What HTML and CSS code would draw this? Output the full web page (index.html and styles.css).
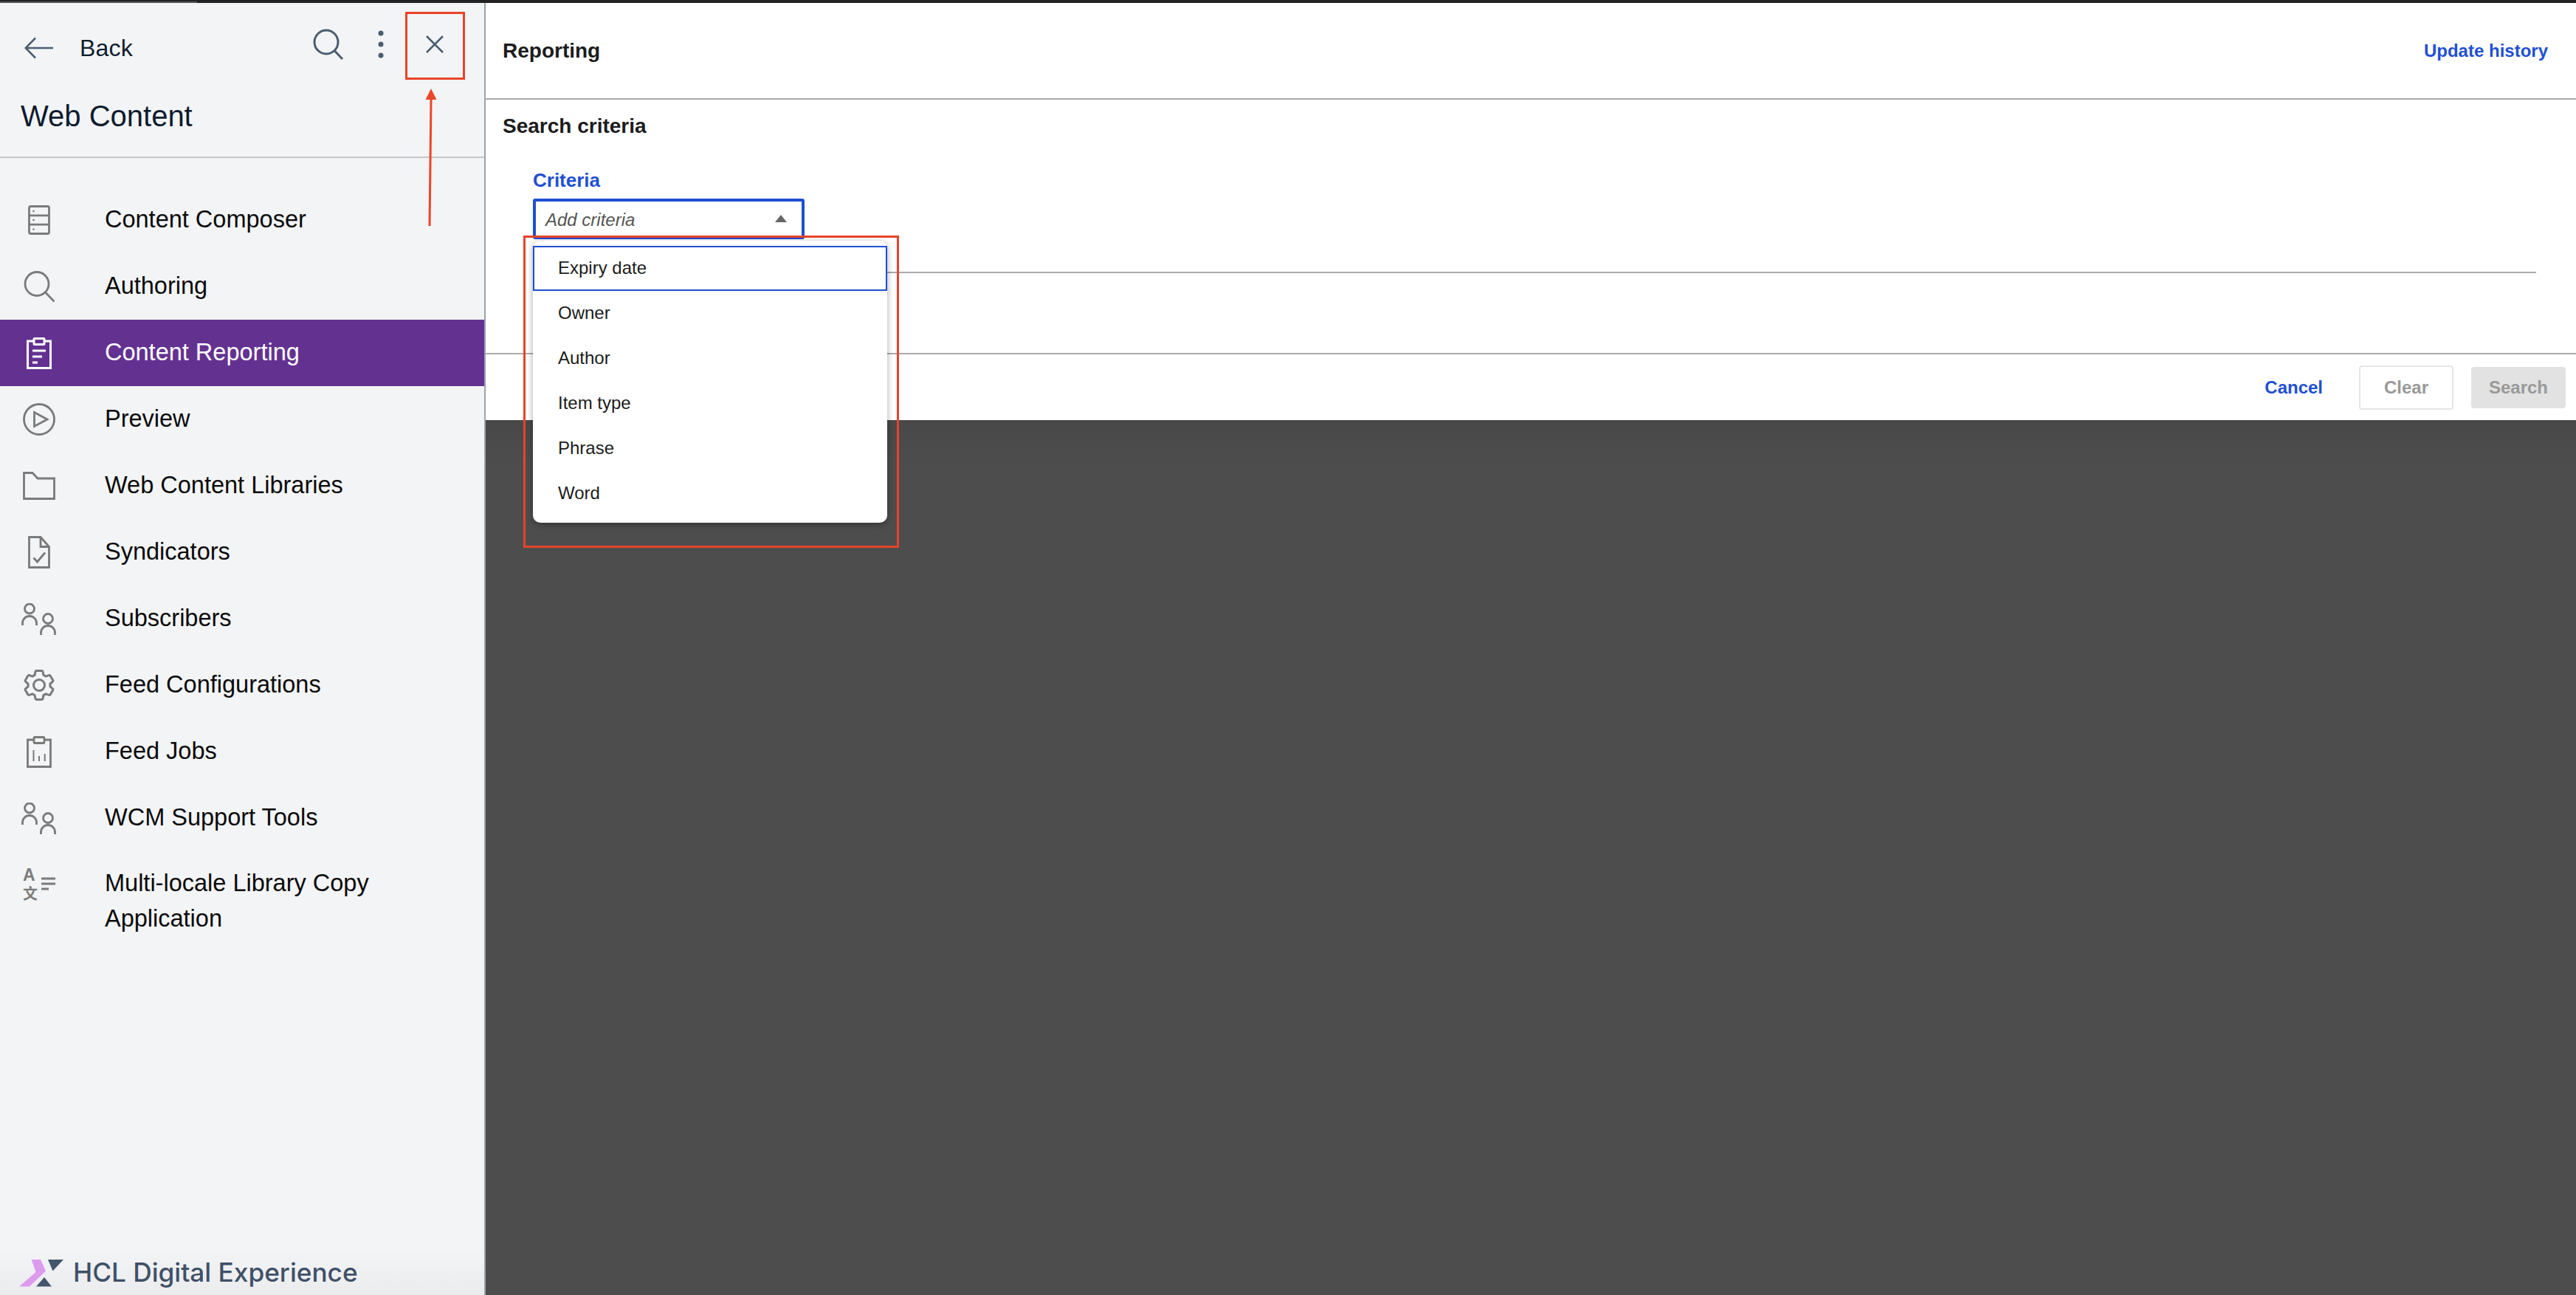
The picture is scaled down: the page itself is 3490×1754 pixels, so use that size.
FILE: index.html
```html
<!DOCTYPE html>
<html lang="en">
<head>
<meta charset="utf-8">
<title>Web Content - Reporting</title>
<link rel="stylesheet" href="styles.css">
</head>
<body>
<div class="page">
  <div class="topbar"><div class="topbar-progress"></div></div>
  <div class="shell">
    <aside class="sidebar">
      <div class="side-head">
        <svg class="back-arrow" width="40" height="30" viewBox="0 0 40 30"><path d="M39 15H2M15 1.5L1.7 15L15 28.5"/></svg>
        <span class="back-label">Back</span>
        <div class="side-tools">
          <svg class="tool tool-search" width="41" height="42" viewBox="0 0 41 42"><circle cx="18" cy="18" r="16"/><path d="M29.500 30L40 41"/></svg>
          <svg class="tool tool-dots" width="8" height="38" viewBox="0 0 8 38"><circle cx="4" cy="4" r="3.500"/><circle cx="4" cy="19" r="3.500"/><circle cx="4" cy="34" r="3.500"/></svg>
          <svg class="tool tool-close" width="26" height="26" viewBox="0 0 26 26"><path d="M2 2L24 24M24 2L2 24"/></svg>
        </div>
      </div>
      <h1 class="side-title">Web Content</h1>
      <nav class="side-nav">
        <a class="nav-row"><span class="nav-icon"><svg class="ico" width="30" height="40" viewBox="0 0 30 40"><rect x="1.500" y="1.500" width="27" height="37" rx="2"/><path d="M1.500 13.800H28.500M1.500 26.200H28.500"/><circle class="dot" cx="7.500" cy="8" r="1.300"/><circle class="dot" cx="7.500" cy="20" r="1.300"/><circle class="dot" cx="7.500" cy="32.500" r="1.300"/></svg></span><span class="nav-text">Content Composer</span></a>
        <a class="nav-row"><span class="nav-icon"><svg class="ico" width="42" height="42" viewBox="0 0 42 42"><circle cx="18" cy="17.500" r="16"/><path d="M29.500 29L41.500 41.500"/></svg></span><span class="nav-text">Authoring</span></a>
        <a class="nav-row nav-active"><span class="nav-icon"><svg class="ico" width="34" height="43" viewBox="0 0 34 43"><path d="M10 5H1.500V41.500H32.500V5H24"/><rect x="10" y="1.500" width="14" height="8" rx="1"/><path d="M8 18H26M8 26H21M8 34H15"/></svg></span><span class="nav-text">Content Reporting</span></a>
        <a class="nav-row"><span class="nav-icon"><svg class="ico" width="44" height="44" viewBox="0 0 44 44"><circle cx="22" cy="22" r="20.500"/><path d="M15.500 12.500L33 22L15.500 31.500Z"/></svg></span><span class="nav-text">Preview</span></a>
        <a class="nav-row"><span class="nav-icon"><svg class="ico" width="44" height="38" viewBox="0 0 44 38"><path d="M1.500 1.500H13L20 9H42.500V36.500H1.500Z"/></svg></span><span class="nav-text">Web Content Libraries</span></a>
        <a class="nav-row"><span class="nav-icon"><svg class="ico" width="30" height="44" viewBox="0 0 30 44"><path d="M1.500 1.500H17L28.500 14.500V42.500H1.500Z"/><path d="M17 1.500V14.500H28.500"/><path d="M7.500 29.500L12.500 35L23 22.500"/></svg></span><span class="nav-text">Syndicators</span></a>
        <a class="nav-row"><span class="nav-icon"><svg class="ico" width="48" height="43" viewBox="0 0 48 43"><circle cx="11" cy="7.500" r="6.500"/><path d="M1.500 30V27A9.500 9.500 0 0 1 20.500 27V30"/><circle cx="36" cy="21" r="6.500"/><path d="M26.500 43V40A9.500 9.500 0 0 1 45.500 40V43"/></svg></span><span class="nav-text">Subscribers</span></a>
        <a class="nav-row"><span class="nav-icon"><svg class="ico-fill" width="42" height="44" viewBox="2 1.500 28 29"><path d="M27,16.760c0-.25,0-.5,0-.76s0-.51,0-.77l1.920-1.680A2,2,0,0,0,29.300,11L26.940,7a2,2,0,0,0-1.730-1,2,2,0,0,0-.64.1l-2.430.82a11.350,11.350,0,0,0-1.310-.75l-.51-2.520a2,2,0,0,0-2-1.610H13.640a2,2,0,0,0-2,1.610l-.51,2.520a11.480,11.480,0,0,0-1.320.75L7.430,6.060A2,2,0,0,0,6.790,6,2,2,0,0,0,5.060,7L2.700,11a2,2,0,0,0,.41,2.510L5,15.240c0,.25,0,.5,0,.76s0,.51,0,.77L3.110,18.450A2,2,0,0,0,2.700,21L5.060,25a2,2,0,0,0,1.730,1,2,2,0,0,0,.64-.1l2.430-.82a11.350,11.350,0,0,0,1.310.75l.51,2.520a2,2,0,0,0,2,1.610h4.720a2,2,0,0,0,2-1.610l.51-2.520a11.480,11.480,0,0,0,1.320-.75l2.420.82a2,2,0,0,0,.64.1,2,2,0,0,0,1.730-1L29.300,21a2,2,0,0,0-.41-2.510ZM25.210,24l-3.430-1.160a8.860,8.860,0,0,1-2.710,1.570L18.360,28H13.640l-.71-3.550a9.360,9.360,0,0,1-2.700-1.570L6.790,24,4.430,20l2.720-2.400a8.900,8.900,0,0,1,0-3.130L4.430,12,6.790,8l3.430,1.160a8.860,8.860,0,0,1,2.710-1.570L13.640,4h4.720l.71,3.550a9.360,9.360,0,0,1,2.700,1.570L25.210,8l2.360,4-2.720,2.400a8.900,8.900,0,0,1,0,3.130L27.570,20Z"/><path d="M16,22a6,6,0,1,1,6-6A5.940,5.940,0,0,1,16,22Zm0-10a3.910,3.910,0,0,0-4,4,3.910,3.910,0,0,0,4,4,3.910,3.910,0,0,0,4-4A3.910,3.910,0,0,0,16,12Z"/></svg></span><span class="nav-text">Feed Configurations</span></a>
        <a class="nav-row"><span class="nav-icon"><svg class="ico" width="34" height="43" viewBox="0 0 34 43"><path d="M10 5H1.500V41.500H32.500V5H24"/><rect x="10" y="1.500" width="14" height="8" rx="1"/><path class="thin" d="M9.500 34V19M17 34V27M24.700 34V24"/></svg></span><span class="nav-text">Feed Jobs</span></a>
        <a class="nav-row"><span class="nav-icon"><svg class="ico" width="48" height="43" viewBox="0 0 48 43"><circle cx="11" cy="7.500" r="6.500"/><path d="M1.500 30V27A9.500 9.500 0 0 1 20.500 27V30"/><circle cx="36" cy="21" r="6.500"/><path d="M26.500 43V40A9.500 9.500 0 0 1 45.500 40V43"/></svg></span><span class="nav-text">WCM Support Tools</span></a>
        <a class="nav-row nav-tall"><span class="nav-icon"><svg class="ico-lang" width="44" height="44" viewBox="0 0 44 44"><text class="lang-a" x="0" y="17">A</text><text class="lang-b" x="0" y="42">文</text><path d="M25 14H44M25 21H44M25 28H35"/></svg></span><span class="nav-text">Multi-locale Library Copy Application</span></a>
      </nav>
      <div class="side-foot">
        <svg width="60" height="37" viewBox="0 0 60 37"><polygon class="logo-pink" points="16.500,0 29,0 36,15.500 14,36.500 0,36.500 22.500,17"/><polygon class="logo-dark" points="39,0 60,0 45.500,15.500"/><polygon class="logo-dark" points="34,24 44,36.500 23,36.500"/></svg>
        <span class="brand">HCL Digital Experience</span>
      </div>
    </aside>
    <main class="main">
      <section class="panel">
        <header class="panel-head">
          <span class="panel-title">Reporting</span>
          <a class="link-strong">Update history</a>
        </header>
        <div class="panel-body">
          <h2 class="section-title">Search criteria</h2>
          <div class="field">
            <label class="field-label">Criteria</label>
            <div class="select-wrap">
              <div class="select">
                <span class="select-placeholder">Add criteria</span>
                <span class="select-caret"></span>
              </div>
              <ul class="dropdown">
                <li class="option option-focus">Expiry date</li>
                <li class="option">Owner</li>
                <li class="option">Author</li>
                <li class="option">Item type</li>
                <li class="option">Phrase</li>
                <li class="option">Word</li>
              </ul>
            </div>
            <div class="field-rule"></div>
          </div>
        </div>
        <footer class="panel-foot">
          <a class="link-strong cancel">Cancel</a>
          <button class="btn btn-outline">Clear</button>
          <button class="btn btn-solid">Search</button>
        </footer>
      </section>
      <div class="backdrop"></div>
    </main>
  </div>
  <div class="mark mark-close"></div>
  <div class="mark mark-menu"></div>
  <svg class="mark-arrow" width="30" height="195" viewBox="0 0 30 195"><polygon points="14,5 6.500,20 21.500,20"/><path d="M14 18L12 191"/></svg>
</div>
</body>
</html>
```
FILE: styles.css
```css
* { box-sizing: border-box; }
html, body { margin: 0; padding: 0; }
body {
  font-family: "Liberation Sans", Arial, sans-serif;
  background: #4d4d4d;
}
.page {
  position: relative;
  width: 3490px;
  height: 1754px;
  overflow: hidden;
  display: flex;
  flex-direction: column;
}
.topbar { height: 4px; background: #222; flex: none; padding-top: 2px; }
.topbar-progress { width: 267px; height: 2px; background: #555; }
.shell { flex: 1; display: flex; min-height: 0; }

/* sidebar */
.sidebar {
  width: 658px;
  flex: none;
  background: #f3f4f6;
  border-right: 2px solid #9aa3ad;
  display: flex;
  flex-direction: column;
}
.side-head {
  height: 122px;
  display: flex;
  align-items: center;
  padding-left: 33px;
  flex: none;
}
.back-arrow path { fill: none; stroke: #4a5d70; stroke-width: 2.500; }
.back-label { font-size: 32px; color: #0f1e2e; margin-left: 35px; letter-spacing: 0.200px; }
.side-tools { margin-left: auto; display: flex; align-items: center; margin-bottom: 10px; padding-right: 54px; }
.tool { flex: none; }
.tool-search { margin-right: 47px; }
.tool-search circle, .tool-search path { fill: none; stroke: #4a5d70; stroke-width: 3; }
.tool-dots { margin-right: 56px; fill: #4a5d70; }
.tool-close path { fill: none; stroke: #4a5d70; stroke-width: 2.500; }
.side-title {
  margin: 7px 0 0;
  padding: 0 0 31px 28px;
  font-size: 40px;
  line-height: 48px;
  font-weight: 400;
  color: #0d1b2e;
  border-bottom: 2px solid #c4c6c9;
  flex: none;
}
.side-nav { padding-top: 39px; flex: none; }
.nav-row { display: flex; align-items: center; height: 90px; color: #0a0a0a; }
.nav-tall { align-items: flex-start; height: auto; padding-top: 20px; }
.nav-tall .nav-icon { padding-top: 3px; }
.nav-icon { width: 106px; flex: none; display: flex; justify-content: center; margin-right: 36px; }
.nav-text { font-size: 32.500px; line-height: 48px; width: 440px; position: relative; top: -1px; }
.nav-active { background: #633291; color: #fff; }
.ico { fill: none; stroke: #7a7a7a; stroke-width: 2.800; display: block; }
.ico .dot { fill: #7a7a7a; stroke: none; }
.ico .thin { stroke-width: 2; }
.ico-fill { fill: #7a7a7a; display: block; }
.nav-active .ico { stroke: #fff; stroke-width: 3; }
.ico-lang { display: block; fill: #7a7a7a; overflow: visible; }
.ico-lang path { fill: none; stroke: #7a7a7a; stroke-width: 3; }
.lang-a { font-family: "Liberation Sans", sans-serif; font-size: 23px; font-weight: 700; }
.lang-b { font-family: "Noto Sans CJK SC", sans-serif; font-size: 20px; font-weight: 700; }
.side-foot {
  margin-top: auto;
  height: 64px;
  padding: 0 0 11px 26px;
  display: flex;
  align-items: flex-end;
  background: linear-gradient(#f3f4f6, #ebecee);
}
.side-foot svg { display: block; flex: none; }
.logo-pink { fill: #dd9bee; }
.logo-dark { fill: #44566c; }
.brand {
  font-family: Inter, sans-serif;
  font-weight: 500;
  font-size: 35.200px;
  line-height: 40px;
  color: #3f5068;
  margin-left: 13px;
  white-space: nowrap;
}

/* main */
.main { flex: 1; display: flex; flex-direction: column; min-width: 0; }
.panel { background: #fff; height: 565px; flex: none; display: flex; flex-direction: column; }
.panel-head {
  height: 131px;
  flex: none;
  display: flex;
  align-items: center;
  justify-content: space-between;
  padding: 0 38px 0 23px;
  border-bottom: 2px solid #aaa;
}
.panel-title { font-size: 28px; font-weight: 700; color: #1c1c1c; }
.link-strong { font-size: 24px; font-weight: 700; color: #1f50d3; }
.panel-body { flex: 1; padding: 19px 54px 0 23px; }
.section-title { margin: 0; font-size: 28px; line-height: 34px; font-weight: 700; color: #1c1c1c; }
.field { margin: 40px 0 0 41px; }
.field-label { display: block; font-size: 26px; line-height: 32px; font-weight: 700; color: #1f50d3; }
.select-wrap { position: relative; margin-top: 9px; }
.select {
  width: 368px;
  height: 55px;
  border: 4px solid #1f4fd0;
  border-radius: 3px;
  display: flex;
  align-items: center;
  justify-content: space-between;
  padding: 2px 20px 0 13px;
}
.select-placeholder { font-size: 24px; font-style: italic; color: #555; }
.select-caret {
  width: 0;
  height: 0;
  border-left: 8px solid transparent;
  border-right: 8px solid transparent;
  border-bottom: 10px solid #666;
  margin-top: -4px;
}
.dropdown {
  position: absolute;
  left: 0;
  top: 57px;
  width: 480px;
  height: 382px;
  margin: 0;
  padding: 7px 0 0;
  list-style: none;
  background: #fff;
  border-radius: 10px;
  box-shadow: 0 2px 8px rgba(0, 0, 0, 0.35);
  z-index: 2;
}
.option {
  height: 61px;
  display: flex;
  align-items: center;
  padding-left: 34px;
  padding-bottom: 1px;
  font-size: 24px;
  color: #1c1c1c;
}
.option-focus { border: 2px solid #1f4fd0; padding-left: 32px; padding-bottom: 2px; }
.field-rule { height: 2px; margin-top: 44px; background: #aaa; }
.panel-foot {
  height: 91px;
  flex: none;
  display: flex;
  align-items: center;
  justify-content: flex-end;
  padding-right: 14px;
  border-top: 2px solid #aaa;
}
.cancel { margin-right: 49px; }
.btn {
  width: 128px;
  font-family: inherit;
  font-size: 24px;
  font-weight: 700;
  color: #999;
  padding: 0;
  border-radius: 4px;
}
.btn-outline { height: 60px; background: #fff; border: 2.500px solid #e5e5e5; margin-right: 24px; }
.btn-solid { height: 56px; background: #e2e2e2; border: 0; }
.backdrop { flex: 1; background: linear-gradient(#484848, #4d4d4d 60px); }

/* annotations over the screenshot */
.mark { position: absolute; border: 3px solid #e8432a; z-index: 5; }
.mark-close { left: 549px; top: 16px; width: 81px; height: 92px; }
.mark-menu { left: 709px; top: 319px; width: 509px; height: 423px; }
.mark-arrow { position: absolute; left: 570px; top: 115px; z-index: 5; }
.mark-arrow polygon { fill: #ee4528; }
.mark-arrow path { fill: none; stroke: #ee4528; stroke-width: 3; }
```
